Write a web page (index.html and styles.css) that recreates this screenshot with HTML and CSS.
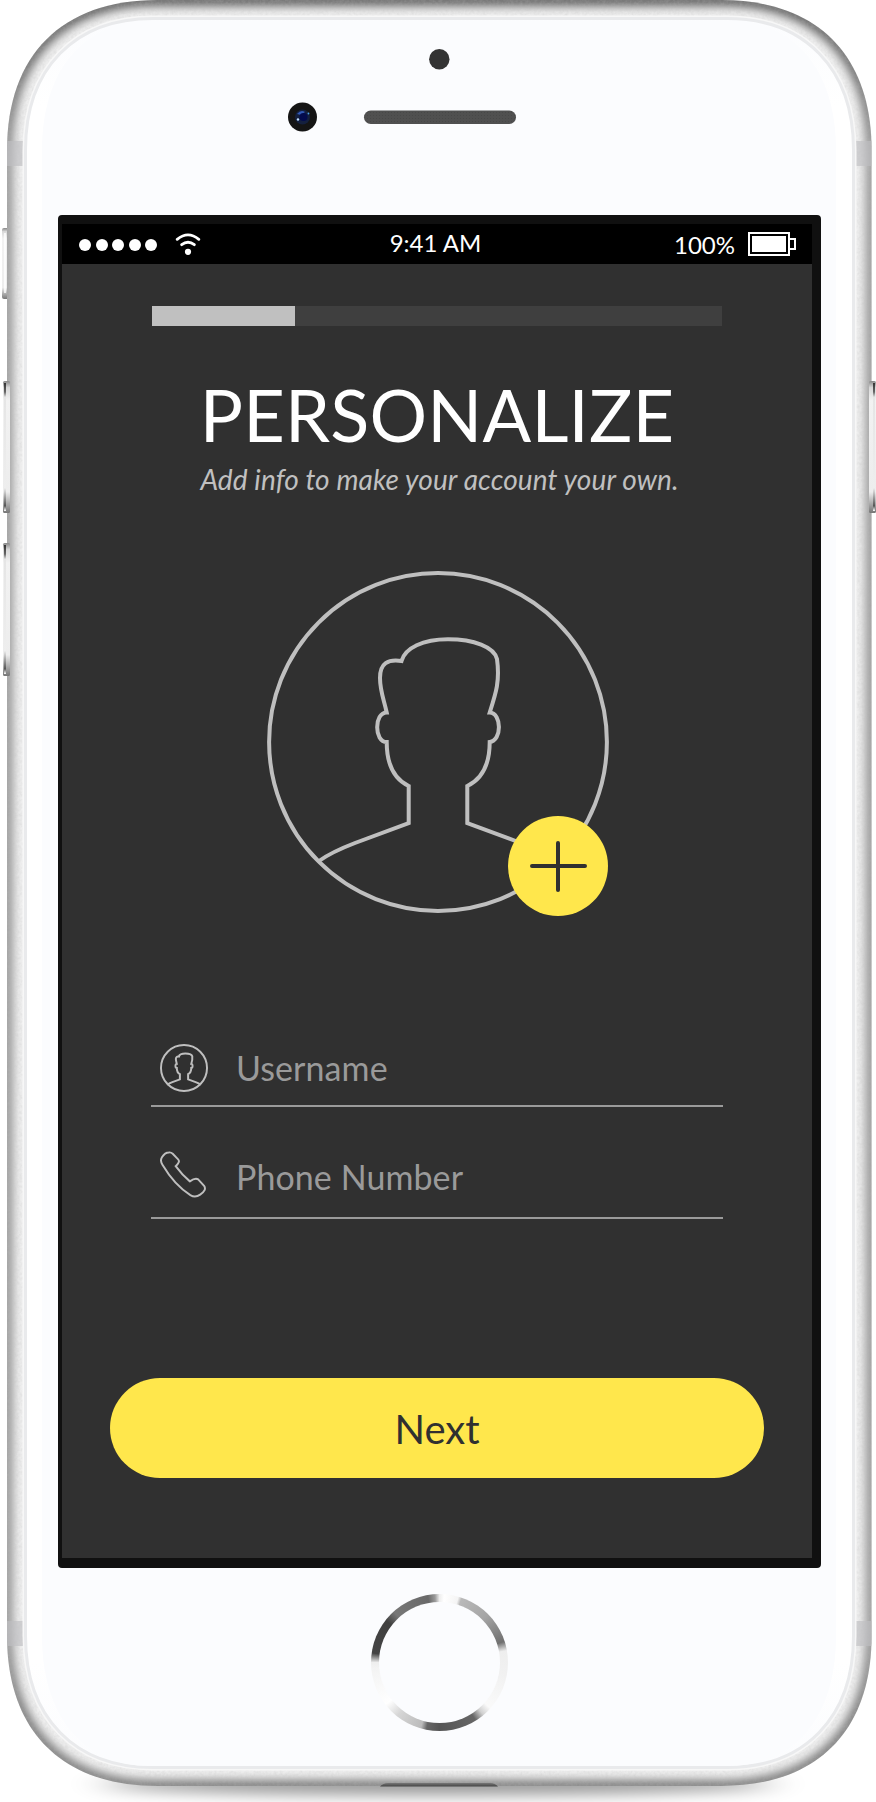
FILE: index.html
```html
<!DOCTYPE html>
<html lang="en">
<head>
<meta charset="utf-8">
<title>Personalize</title>
<link rel="stylesheet" href="styles.css">
</head>
<body>
<div class="device">
  <svg class="shell" viewBox="0 0 876 1802" aria-hidden="true">
    <defs>
      <path id="body" d="M157 0H721.5C817 0 871.6 55 871.6 150V1636C871.6 1731 817 1786 721.5 1786H157C62 1786 7 1731 7 1636V150C7 55 62 0 157 0Z"/>
      <path id="face" d="M153 18.500H727C804 18.500 853.500 68 853.500 150V1636C853.500 1718 804 1767.500 727 1767.500H153C75 1767.500 25.500 1718 25.500 1636V150C25.500 68 75 18.500 153 18.500Z"/>
      <clipPath id="bodyClip"><use href="#body"/></clipPath>
      <filter id="soft" x="-5%" y="-5%" width="110%" height="110%"><feGaussianBlur stdDeviation="5"/></filter>
      <filter id="shadow" x="-20%" y="-200%" width="140%" height="500%"><feGaussianBlur stdDeviation="20 8"/></filter>
      <filter id="grain" x="0" y="0" width="100%" height="100%">
        <feTurbulence type="fractalNoise" baseFrequency=".35" numOctaves="2" seed="4"/>
        <feColorMatrix values="0 0 0 0 .5  0 0 0 0 .5  0 0 0 0 .5  .8 0 0 0 -.25"/>
      </filter>
      <linearGradient id="key" x1="0" x2="0" y1="0" y2="1">
        <stop offset="0" stop-color="#888"/><stop offset=".05" stop-color="#d8d8d8"/><stop offset=".15" stop-color="#f2f2f2"/>
        <stop offset=".84" stop-color="#ededed"/><stop offset=".93" stop-color="#aaa"/><stop offset="1" stop-color="#777"/>
      </linearGradient>
      <linearGradient id="glint" x1="0" x2="0" y1="0" y2="1">
        <stop offset="0" stop-color="#333"/><stop offset=".07" stop-color="#666"/><stop offset=".11" stop-color="#e5e5e5"/>
        <stop offset=".82" stop-color="#eee"/><stop offset=".96" stop-color="#555"/><stop offset="1" stop-color="#fff"/>
      </linearGradient>
      <linearGradient id="fade" x1="0" x2="0" y1="0" y2="1">
        <stop offset="0" stop-color="#fbfcfe"/><stop offset=".05" stop-color="#fff"/>
        <stop offset=".94" stop-color="#fff"/><stop offset="1" stop-color="#fbfcfe"/>
      </linearGradient>
      <linearGradient id="port" x1="0" x2="0" y1="0" y2="1"><stop offset="0" stop-color="#777"/><stop offset="1" stop-color="#444"/></linearGradient>
      <linearGradient id="rim" gradientUnits="userSpaceOnUse" x1="0" x2="0" y1="0" y2="1786">
        <stop offset="0" stop-opacity=".62"/><stop offset=".04" stop-opacity=".55"/><stop offset=".09" stop-opacity=".38"/>
        <stop offset=".91" stop-opacity=".38"/><stop offset=".96" stop-opacity=".5"/><stop offset="1" stop-opacity=".5"/>
      </linearGradient>
      <pattern id="mesh" width="3" height="3" patternUnits="userSpaceOnUse"><path fill="#505050" d="M0 0h3v3H0z"/><path fill="#484848" d="M1 1h1v1H1z"/></pattern>
    </defs>

    <ellipse cx="438" cy="1784" rx="335" ry="11" fill="#000" opacity=".42" filter="url(#shadow)"/>

    <rect x="2" y="228" width="8" height="71" rx="2" fill="url(#key)"/>
    <path d="M5 233v60" stroke="#fff" stroke-width="1.500"/>
    <use href="#body" fill="#f1f1f1"/>
    <g clip-path="url(#bodyClip)">
      <use href="#body" fill="none" stroke="url(#rim)" stroke-width="12" filter="url(#soft)"/>
      <path d="M7 0h865v150H7zM7 1636h865v150H7zM7 150h18v1486H7zM854 150h18v1486h-18z" fill="#fff" filter="url(#grain)" opacity=".5"/>
      <path d="M7 141h16v25H7zM856 141h16v25h-16zM7 1621h16v25H7zM856 1621h16v25h-16z" fill="#bfbfc2" opacity=".65"/>
    </g>
    <use href="#face" fill="none" stroke="#f7f7f7" stroke-width="6"/>
    <use href="#face" fill="url(#fade)" stroke="#e9eaec" stroke-width="3"/>
    <path d="M150 21H728C795 21 836 70 836 150V1636C836 1717 795 1766 728 1766H150C84 1766 42 1717 42 1636V150C42 70 84 21 150 21Z" fill="#fbfcfe"/>

    <rect x="3" y="381" width="7" height="132" rx="1.500" fill="url(#key)"/>
    <rect x="4" y="383" width="2" height="128" fill="url(#glint)"/>
    <rect x="3" y="543" width="7" height="133" rx="1.500" fill="url(#key)"/>
    <rect x="4" y="545" width="2" height="129" fill="url(#glint)"/>
    <rect x="869" y="381" width="7" height="132" rx="1.500" fill="url(#key)"/>
    <rect x="873" y="383" width="2" height="128" fill="url(#glint)"/>

    <circle cx="439.300" cy="59.300" r="10.200" fill="#333"/>
    <circle cx="302.500" cy="117" r="14.500" fill="#151515"/>
    <circle cx="302.500" cy="117" r="7.500" fill="#14203f"/>
    <path d="M297 114q4-5 8-2l-4 3z" fill="#3159b5"/>
    <circle cx="303.500" cy="117" r="4" fill="#030b4d"/>
    <circle cx="298" cy="119.500" r="1.200" fill="#bfe0ff"/>
    <circle cx="308.500" cy="113.500" r=".9" fill="#4ba0e8"/>
    <rect x="364" y="110.500" width="152" height="13.500" rx="6.700" fill="url(#mesh)"/>
    <path d="M380 1786.500q3-3.500 8-3.500H490q5 0 8 3.500z" fill="url(#port)"/>
  </svg>

  <main class="screen">
    <header class="status">
      <div class="signal">
        <i class="dot"></i><i class="dot"></i><i class="dot"></i><i class="dot"></i><i class="dot"></i>
        <svg class="wifi" viewBox="0 0 26 24"><g fill="none" stroke="#fff" stroke-width="2.800" stroke-linecap="round"><path d="M2.200 7.300Q13-1.500 23.800 7.300M6.700 12.700q6.300-5 12.600 0"/></g><circle cx="13" cy="19.800" r="3.100" fill="#fff"/></svg>
      </div>
      <span class="clock">9:41 AM</span>
      <div class="power">
        <span class="percent">100%</span>
        <svg class="battery" viewBox="0 0 48 24"><path d="M1 1H41V7H47V17H41V23H1Z" fill="none" stroke="#fff" stroke-width="2"/><path d="M41 7V17" stroke="#fff" stroke-width="2"/><path d="M4 4H38V20H4Z" fill="#fff"/></svg>
      </div>
    </header>

    <div class="progress"><div class="progress-fill" style="width:25%"></div></div>
    <h1 class="title">PERSONALIZE</h1>
    <p class="subtitle">Add info to make your account your own.</p>

    <div class="avatar">
      <svg class="portrait" viewBox="0 0 370 370">
        <g fill="none" stroke="#bfbfbf" stroke-width="4">
          <circle cx="188" cy="182" r="168.900"/>
          <path id="bust" d="M69 301C80 293 92 288 105 283L158.700 263V226C144 219 136.700 204 136.700 182C124 182 124 152.500 136.700 152.500C134 140 130 131 130 118C130 103 138 99 151.500 101C155 88 173 79.300 198 79.300C224 79.300 244 87 247 99C250 121 246 133 239.700 152.500C252 153 252 181 239.700 182C239.700 204 232 219 217.300 226V263L271 283C284 288 296 293 307 301"/>
        </g>
      </svg>
      <button class="add" aria-label="Add photo"><svg viewBox="0 0 100 100"><path d="M24 50H77M50 27V74" stroke="#303030" stroke-width="4" stroke-linecap="round"/></svg></button>
    </div>

    <form class="form">
      <label class="field">
        <svg class="field-icon" viewBox="17 11 342 342"><g fill="none" stroke="#bfbfbf" stroke-width="14"><circle cx="188" cy="182" r="164"/><use href="#bust"/></g></svg>
        <span class="placeholder">Username</span>
      </label>
      <label class="field">
        <svg class="field-icon" viewBox="0 0 49 49"><path d="M9 1.500Q5 1.500 2 6.500Q-.2 10 2.500 14C9 25 20 38 31 45Q36 48 41 44.500Q48 40 45 35.500L39 29Q36 27 30.500 31Q23 25 16 15.500Q21 11 18.500 8.500L13 2.800Q11 1 9 1.500Z" fill="none" stroke="#bfbfbf" stroke-width="2"/></svg>
        <span class="placeholder">Phone Number</span>
      </label>
      <button class="next" type="button">Next</button>
    </form>
  </main>

  <div class="home"></div>
</div>
</body>
</html>
```

FILE: styles.css
```css
* { box-sizing: border-box; }

body {
  margin: 0;
  background: #fff;
  font-family: Lato, sans-serif;
}

.device {
  position: relative;
  width: 876px;
  height: 1802px;
  overflow: hidden;
  padding: 215px 56px 0 58px;
}

/* Decorative hardware lies behind the content */
.shell {
  position: absolute;
  inset: 0;
  width: 876px;
  height: 1802px;
}

.screen {
  position: relative;
  width: 763px;
  height: 1353px;
  padding: 0;
  border: solid #101010;
  border-width: 9px 9px 10px 4px;
  border-radius: 4px;
  background: #303030;
  display: flex;
  flex-direction: column;
  align-items: center;
}

.status {
  width: 100%;
  height: 40px;
  padding: 0 16px 0 17px;
  background: #000;
  color: #fff;
  display: grid;
  grid-template-columns: 1fr auto 1fr;
  align-items: center;
  font-size: 24px;
  font-weight: 400;
  line-height: 24px;
}

.signal, .power { display: flex; align-items: center; }
.signal { gap: 4.500px; padding-top: 2px; }
.dot { width: 12px; height: 12px; border-radius: 50%; background: #fff; }
.wifi { width: 26px; height: 24px; margin-left: 13px; margin-top: -2px; }
.clock { padding-bottom: 2px; margin: 0 2px 0 -2px; }
.power { justify-content: flex-end; gap: 13px; }
.percent { padding-top: 1px; }
.battery { width: 48px; height: 24px; }

.progress {
  width: 570px;
  height: 20px;
  margin-top: 42px;
  background: #3f3f3f;
}
.progress-fill { height: 100%; background: #c0c0c0; }

.title {
  margin: 45px 0 0;
  color: #fff;
  font-size: 72px;
  font-weight: 400;
  line-height: 86px;
  letter-spacing: .2px;
}

.subtitle {
  margin: 5px 0 0 5px;
  color: #c0c0c0;
  font-size: 28px;
  font-style: italic;
  line-height: 34px;
  letter-spacing: .11px;
}

.avatar { position: relative; width: 370px; height: 370px; margin: 64px 4px 0 0; }
.portrait { display: block; width: 370px; height: 370px; }

.add {
  position: absolute;
  left: 258px;
  top: 256px;
  width: 100px;
  height: 100px;
  padding: 0;
  border: 0;
  border-radius: 50%;
  background: #ffe74c;
}
.add svg { display: block; }

.form { width: 654px; margin-top: 83px; }
.field {
  display: flex;
  align-items: center;
  gap: 28px;
  width: 572px;
  margin: 0 41px;
  border-bottom: 2px solid #9a9a9a;
}
.field:first-child { height: 94px; padding-top: 18px; }
.field:nth-child(2) { height: 112px; padding-top: 30px; }
.field-icon { width: 48px; height: 48px; margin-left: 9px; }
.field:nth-child(2) .field-icon { margin-top: -4px; }
.placeholder { color: #9a9a9a; font-size: 34px; line-height: 40px; letter-spacing: .08px; }

.next {
  display: block;
  width: 654px;
  height: 100px;
  margin-top: 159px;
  padding: 2px 0 0;
  border: 0;
  border-radius: 50px;
  background: #ffe74c;
  color: #303030;
  font: 400 40px/48px Lato, sans-serif;
}

.home {
  position: relative;
  width: 137px;
  height: 137px;
  margin: 26px 0 0 313px;
  border-radius: 50%;
  background: conic-gradient(from 0deg, #eee 0, #fff 4deg, #f4f4f4 16deg, #b9b9b9 19deg, #a5a5a5 45deg, #707070 72deg, #eee 80deg, #f1f1f1 100deg, #fafafa 132deg, #d0d0d0 140deg, #666 148deg, #555 180deg, #666 191deg, #bbb 196deg, #d5d5d5 218deg, #fff 232deg, #f3f3f3 265deg, #eee 270deg, #444 278deg, #404040 308deg, #777 318deg, #696969 350deg, #999 356deg, #eee 360deg);
}
.home::after {
  content: "";
  position: absolute;
  inset: 8px;
  border-radius: 50%;
  background: #fbfcfe;
}
```
